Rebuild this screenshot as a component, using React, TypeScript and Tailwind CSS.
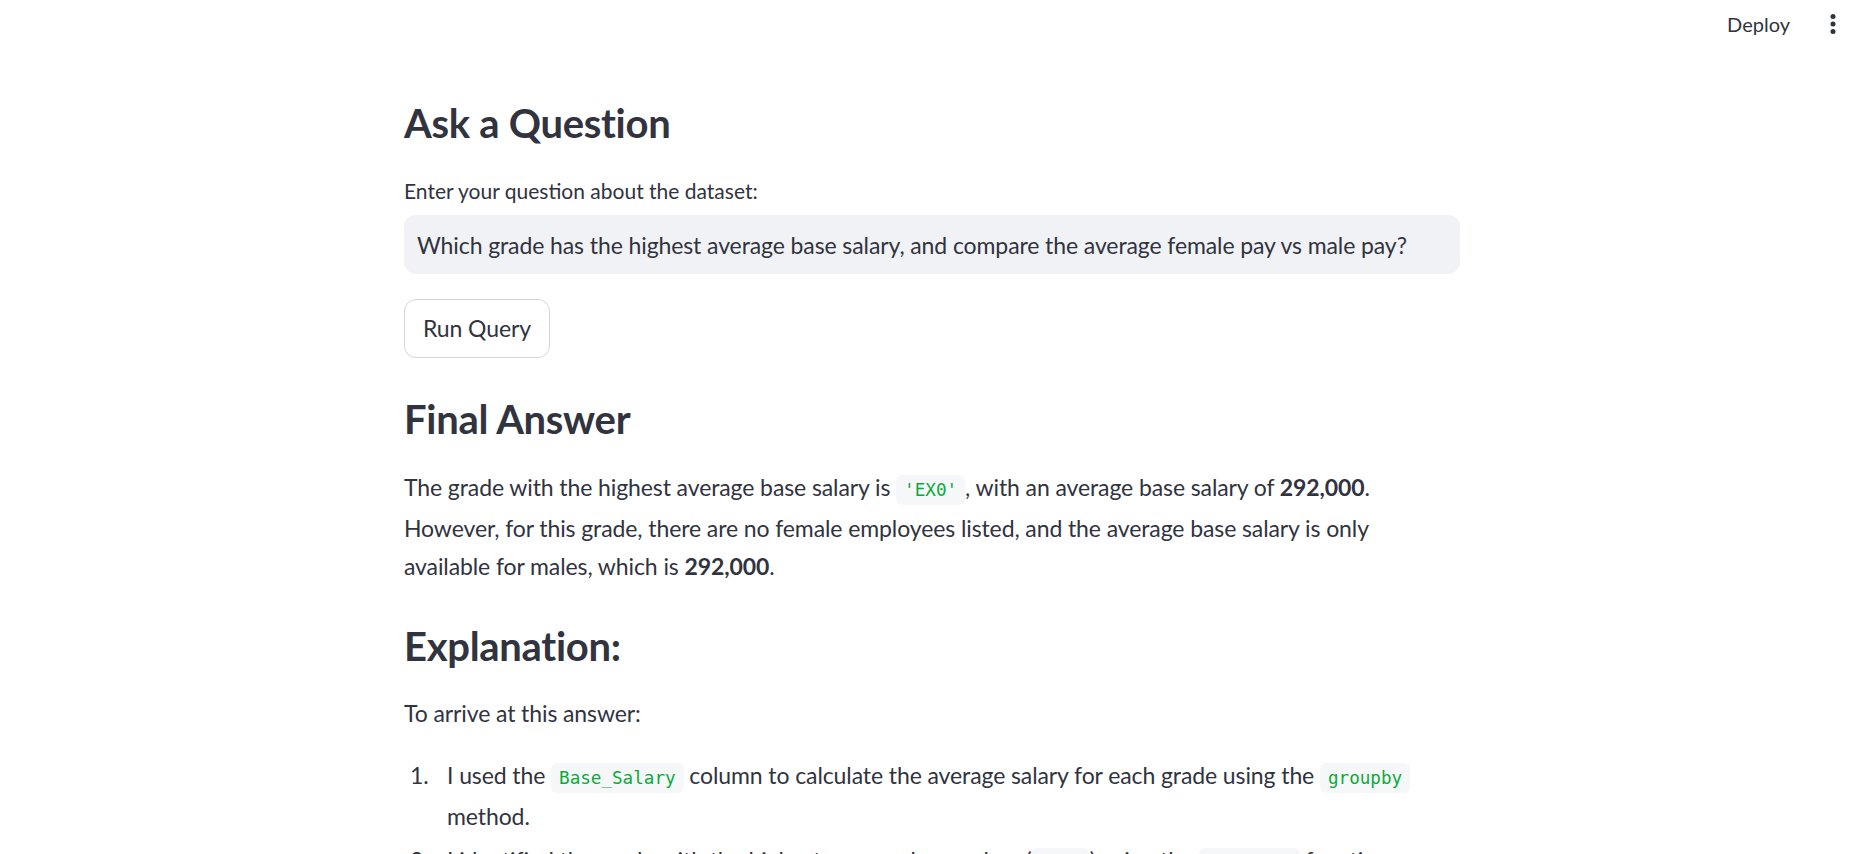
import React from 'react';

const Code = ({ children }: { children: React.ReactNode }) => (
    <code className="rounded-[6px] bg-[#f6f7f9] px-[8px] py-[5px] font-['DejaVu_Sans_Mono',monospace] text-[17.6px] tracking-normal text-[#09ab3b]">
        {children}
    </code>
);

function Heading({ children, className }: { children: React.ReactNode; className?: string }) {
    return <h2 className={`text-[40px] font-bold leading-[50px] tracking-[-0.3px] ${className ?? ''}`}>{children}</h2>;
}

function Header() {
    return (
        <header className="flex h-[48px] items-center justify-end pr-[32px]">
            <button className="mr-[33px] text-[20px] leading-[28px]">Deploy</button>
            <button aria-label="Main menu" className="flex h-[20px] w-[20px] items-center justify-center">
                <svg width="20" height="22" viewBox="0 0 20 22" fill="#31333f">
                    <circle cx="10" cy="3.5" r="2.5" />
                    <circle cx="10" cy="11" r="2.5" />
                    <circle cx="10" cy="18.5" r="2.5" />
                </svg>
            </button>
        </header>
    );
}

export default function App() {
    return (
        <div className="h-screen overflow-hidden bg-white font-['Lato',sans-serif] text-[#31333f]">
            <Header />
            <main className="pl-[404px]">
                <div className="w-[1056px]">
                    <Heading className="mt-[50px]">Ask a Question</Heading>

                    <label className="mt-[29px] block text-[21px] leading-[28px]">
                        Enter your question about the dataset:
                    </label>
                    <input
                        readOnly
                        value="Which grade has the highest average base salary, and compare the average female pay vs male pay?"
                        className="mt-[10px] block h-[59px] w-full rounded-[12px] bg-[#f0f2f6] px-[13px] text-[23px] tracking-[-0.1px] text-[#31333f] outline-none"
                    />

                    <button className="mt-[25px] h-[59px] rounded-[12px] border border-[#d6d6d9] bg-white px-[18px] text-[23px] tracking-[-0.1px]">
                        Run Query
                    </button>

                    <Heading className="mt-[36px]">Final Answer</Heading>
                    <p className="mt-[24px] whitespace-nowrap text-[23px] leading-[38px] tracking-[-0.1px]">
                        The grade with the highest average base salary is <Code>'EX0'</Code>, with an average base salary of{' '}
                        <strong className="font-bold">292,000</strong>.
                        <br />
                        However, for this grade, there are no female employees listed, and the average base salary is only
                        <br />
                        available for males, which is <strong className="font-bold">292,000</strong>.
                    </p>

                    <Heading className="mt-[36px]">Explanation:</Heading>
                    <p className="mt-[23px] text-[23px] leading-[38px] tracking-[-0.1px]">To arrive at this answer:</p>

                    <ol className="mt-[24px] whitespace-nowrap text-[23px] leading-[38px] tracking-[-0.1px]">
                        <li className="flex">
                            <span className="w-[43px] shrink-0 pl-[6px]">1.</span>
                            <span>
                                I used the <Code>Base_Salary</Code> column to calculate the average salary for each grade using the{' '}
                                <Code>groupby</Code>
                                <br />
                                method.
                            </span>
                        </li>
                        <li className="mt-[6px] flex">
                            <span className="w-[43px] shrink-0 pl-[6px]">2.</span>
                            <span>
                                I identified the grade with the highest average base salary (<Code>mean</Code>) using the{' '}
                                <Code>idxmax()</Code> function.
                            </span>
                        </li>
                        <li className="mt-[6px] flex">
                            <span className="w-[43px] shrink-0 pl-[6px]">3.</span>
                            <span>I then filtered the data for that grade to compare the average pay of female and male employees.</span>
                        </li>
                    </ol>
                </div>
            </main>
        </div>
    );
}
